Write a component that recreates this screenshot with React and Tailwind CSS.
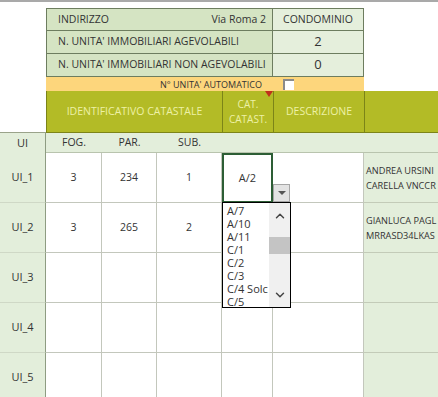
import { ChevronUp, ChevronDown } from "lucide-react";

const rows = [
  { ui: "UI_1", fog: "3", par: "234", sub: "1", cat: "A/2", desc: ["ANDREA URSINI", "CARELLA VNCCR"] },
  { ui: "UI_2", fog: "3", par: "265", sub: "2", cat: "", desc: ["GIANLUCA PAGL", "MRRASD34LKAS"] },
  { ui: "UI_3" },
  { ui: "UI_4" },
  { ui: "UI_5" },
];

const options = ["A/7", "A/10", "A/11", "C/1", "C/2", "C/3", "C/4 Solc", "C/5"];

function Dropdown() {
  return (
    <>
      <div className="absolute left-[273px] top-[184px] w-[17px] h-[18px] bg-[#e3e3e3] border border-[#a6a6a6] flex items-center justify-center z-10">
        <div className="w-0 h-0 border-l-[4px] border-r-[4px] border-t-[4px] border-l-transparent border-r-transparent border-t-[#555]" />
      </div>
      <div className="absolute left-[222px] top-[202px] w-[69px] h-[106px] bg-white border border-black z-10 flex overflow-hidden">
        <div className="flex-1 pl-[4px] pt-[1px] text-[11px] leading-[13px] text-[#333] whitespace-nowrap">
          {options.map((o) => (
            <div key={o}>{o}</div>
          ))}
        </div>
        <div className="absolute right-0 top-0 bottom-0 w-[21px] bg-[#f0f0f0] flex flex-col items-center">
          <ChevronUp className="w-[14px] h-[14px] mt-[6px] text-[#444]" strokeWidth={2.5} />
          <div className="w-full h-[17px] bg-[#c4c4c4] mt-[14px]" />
          <div className="flex-1" />
          <ChevronDown className="w-[14px] h-[14px] mb-[5px] text-[#444]" strokeWidth={2.5} />
        </div>
      </div>
    </>
  );
}

export default function App() {
  const hd = "border-[#6d7d5f]";
  return (
    <div
      className="relative w-[438px] h-[397px] overflow-hidden bg-white text-[#333]"
      style={{ fontFamily: "'Open Sans', 'Liberation Sans', sans-serif" }}
    >
      <div className="h-[2px] bg-[#a9a9a9]" />
      <div className="grid grid-cols-[46px_56px_55px_65px_51px_91px_74px] grid-rows-[6px_23px_23px_23px_14px_42px_20px_50px_50px_50px_50px_50px] text-[10.5px]">
        {/* spacer */}
        <div className="col-span-7" />

        {/* info rows */}
        <div />
        <div className={`col-span-4 bg-[#d5e4c3] border ${hd} flex items-center justify-between pl-[11px] pr-[6px]`}>
          <span>INDIRIZZO</span>
          <span>Via Roma 2</span>
        </div>
        <div className={`bg-[#e5efdc] border-t border-r border-b ${hd} flex items-center justify-center`}>CONDOMINIO</div>
        <div />

        <div />
        <div className={`col-span-4 bg-[#d5e4c3] border-l border-r border-b ${hd} flex items-center pl-[11px]`}>
          N. UNITA' IMMOBILIARI AGEVOLABILI
        </div>
        <div className={`bg-[#e5efdc] border-r border-b ${hd} flex items-center justify-center text-[13px]`}>2</div>
        <div />

        <div />
        <div className={`col-span-4 bg-[#d5e4c3] border-l border-r border-b ${hd} flex items-center pl-[11px]`}>
          N. UNITA' IMMOBILIARI NON AGEVOLABILI
        </div>
        <div className={`bg-[#e5efdc] border-r border-b ${hd} flex items-center justify-center text-[13px]`}>0</div>
        <div />

        {/* yellow row */}
        <div />
        <div className="col-span-4 bg-[#fdd67c] flex items-center justify-end pr-[11px] text-[9px] leading-none">
          N° UNITA' AUTOMATICO
        </div>
        <div className="bg-[#fdd67c] flex items-center pl-[10px]">
          <div className="w-[11px] h-[11px] bg-white border-l-2 border-t-2 border-[#8a8a8a]" />
        </div>
        <div />

        {/* olive header */}
        <div className="border-b border-[#9aa38a]" />
        <div className="col-span-3 bg-[#b3bb26] border-l border-b border-[#7c8418] flex items-center justify-center text-[#eef1a6] text-[10.5px]">
          IDENTIFICATIVO CATASTALE
        </div>
        <div className="relative bg-[#b3bb26] border-l border-b border-[#7c8418] flex flex-col items-center justify-center text-[#eef1a6] text-[10px] leading-[15px]">
          <span>CAT.</span>
          <span>CATAST.</span>
          <div className="absolute right-0 top-0 w-0 h-0 border-l-[4px] border-r-[4px] border-t-[6px] border-l-transparent border-r-transparent border-t-[#c0301c]" />
        </div>
        <div className="bg-[#b3bb26] border-l border-b border-[#7c8418] flex items-center justify-center text-[#eef1a6] text-[10.5px]">
          DESCRIZIONE
        </div>
        <div className="bg-[#b3bb26] border-l border-b border-[#7c8418]" />

        {/* column header row */}
        <div className="bg-[#e3eedb] border-r border-[#8e9c82] flex items-center justify-center text-[11px]">UI</div>
        <div className="bg-[#e3eedb] border-b border-[#b9c4ae] flex items-center justify-center">FOG.</div>
        <div className="bg-[#e3eedb] border-b border-[#b9c4ae] flex items-center justify-center">PAR.</div>
        <div className="bg-[#e3eedb] border-b border-[#b9c4ae] flex items-center justify-center">SUB.</div>
        <div className="bg-[#e3eedb] border-b border-[#b9c4ae]" />
        <div className="bg-[#e3eedb] border-b border-[#b9c4ae]" />
        <div className="bg-[#e3eedb] border-b border-[#b9c4ae]" />

        {/* data rows */}
        {rows.map((r) => (
          <div key={r.ui} className="contents">
            <div className="bg-[#e3eedb] border-r border-b border-r-[#8e9c82] border-b-[#cfd8c6] flex items-center justify-center text-[11px]">
              {r.ui}
            </div>
            <div className="bg-white border-r border-b border-[#c3c7bc] flex items-center justify-center">{r.fog}</div>
            <div className="bg-white border-r border-b border-[#c3c7bc] flex items-center justify-center">{r.par}</div>
            <div className="bg-white border-r border-b border-[#c3c7bc] flex items-center justify-center">{r.sub}</div>
            {r.cat ? (
              <div className="bg-white border-2 border-[#2d5e35] flex items-center justify-center text-[11px]">{r.cat}</div>
            ) : (
              <div className="bg-white border-r border-b border-[#c3c7bc]" />
            )}
            <div className="bg-white border-r border-b border-[#c3c7bc]" />
            <div className="bg-[#e3eedb] border-b border-[#c3cbb8] flex flex-col justify-center pl-[2px] text-[9.2px] leading-[15px] whitespace-nowrap">
              {r.desc && r.desc.map((d) => <span key={d}>{d}</span>)}
            </div>
          </div>
        ))}
      </div>
      <Dropdown />
    </div>
  );
}
